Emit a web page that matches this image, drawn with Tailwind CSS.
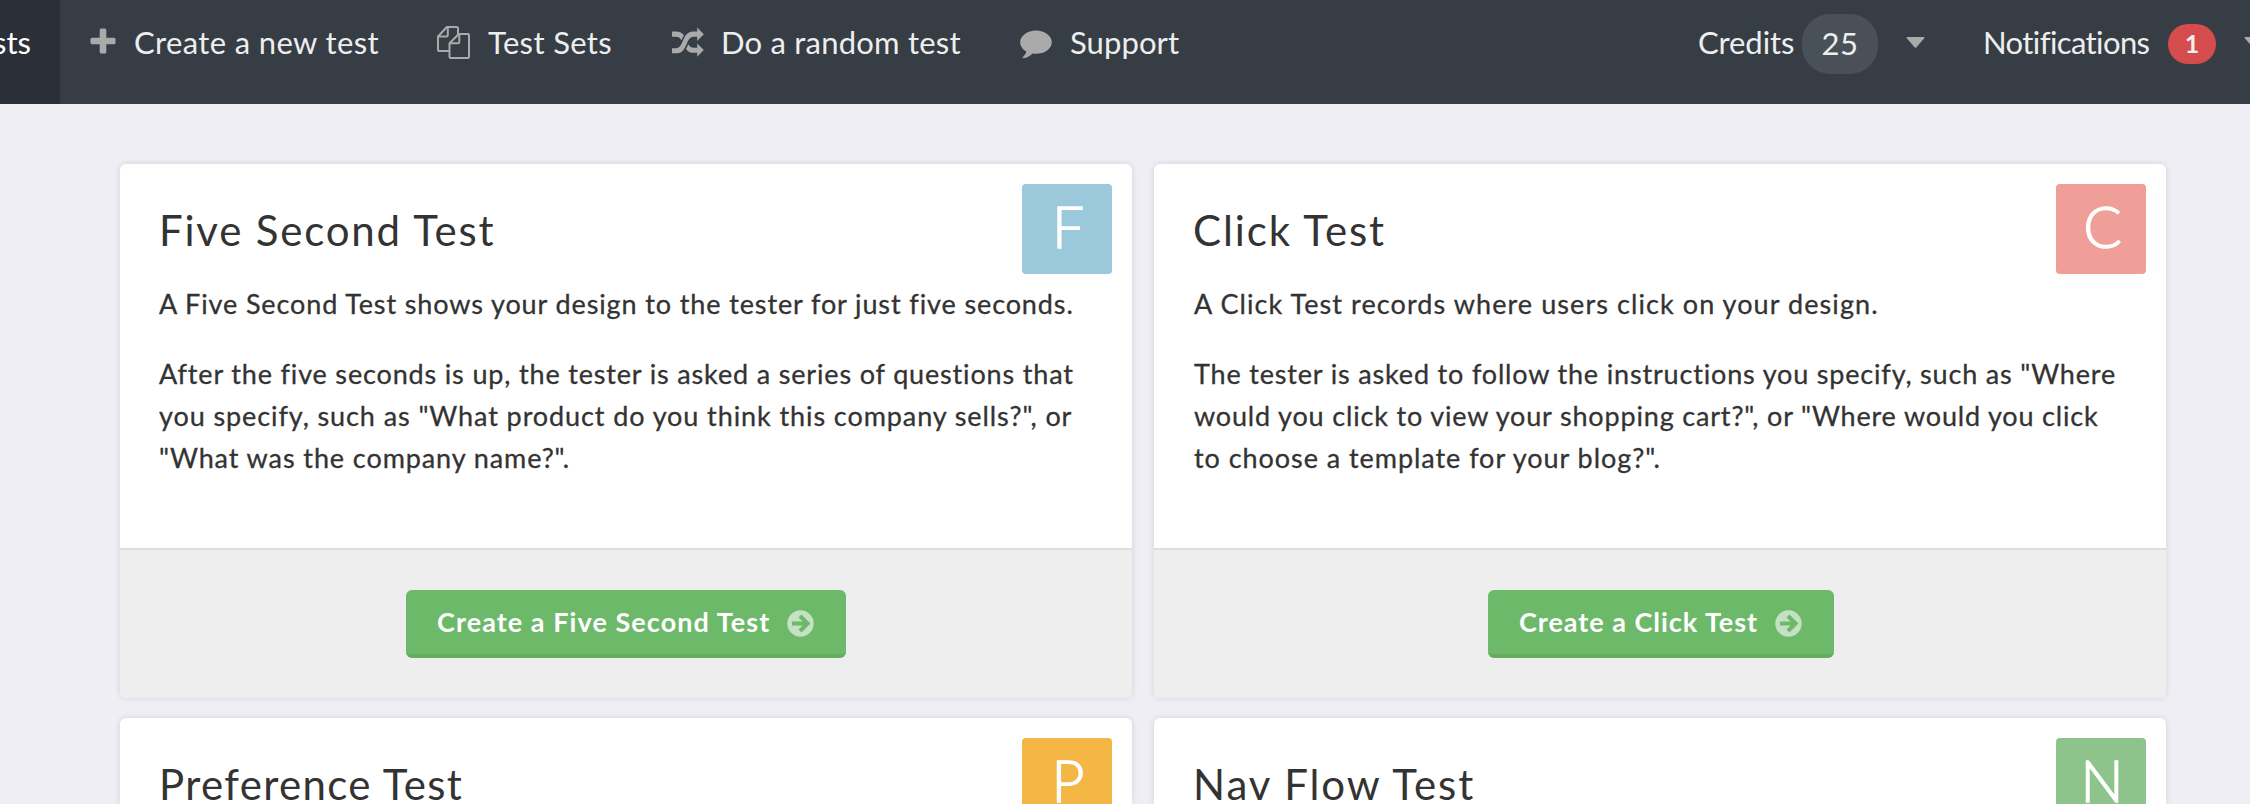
<!DOCTYPE html>
<html lang="en">
<head>
<meta charset="utf-8">
<title>Create a test</title>
<script src="https://cdn.jsdelivr.net/npm/@tailwindcss/browser@4"></script>
</head>
<body class="w-[2250px] h-[804px] overflow-hidden bg-[#efeef4] font-['Lato','Open_Sans',sans-serif] text-[#333333]">

<header class="flex h-[104px] w-[2250px] overflow-hidden bg-[#363d45] text-[31px] leading-[85px] text-[#eeeeee] whitespace-nowrap">
  <a class="flex w-[60px] shrink-0 justify-end bg-[#2b2f37] pr-[29px] text-white"><span>Tests</span></a>

  <nav class="flex h-[85px] items-center">
    <a class="flex w-[377px] items-center pl-[30px]">
      <svg class="mt-[-3px] h-[26px] w-[26px]" viewBox="0 0 26 26" fill="#aaaaaa"><rect x="9.700" y="0.500" width="6.600" height="25" rx="1.600"/><rect x="0.500" y="9.700" width="25" height="6.600" rx="1.600"/></svg>
      <span class="ml-[18px] tracking-[0.37px]">Create a new test</span>
    </a>
    <a class="flex w-[235px] items-center">
      <svg class="h-[33px] w-[33px]" viewBox="0 0 33 33" fill="none" stroke="#aaaaaa" stroke-width="2" stroke-linejoin="round"><path d="M12.500 25H2.200a1.200 1.200 0 0 1-1.200-1.200V10.500L9.800 1H19.800a1.200 1.200 0 0 1 1.200 1.200V8.300"/><path d="M10.800 1V9.300a1.200 1.200 0 0 1-1.200 1.200H1"/><path d="M12.500 17.300L21.800 8H30.800a1.200 1.200 0 0 1 1.200 1.200V30.800a1.200 1.200 0 0 1-1.200 1.200H13.700a1.200 1.200 0 0 1-1.200-1.200z"/><path d="M22.300 8V16.100a1.200 1.200 0 0 1-1.200 1.200H12.500"/></svg>
      <span class="ml-[18px] tracking-[0.36px]">Test Sets</span>
    </a>
    <a class="flex w-[348px] items-center">
      <svg class="mt-[-2px] h-[30px] w-[32px]" viewBox="0 0 32 30" fill="#aaaaaa"><path d="M25.200 0.500L31.800 7.200L25.200 13.900V9.700H22C18.500 9.700 17 11.800 15.400 15.200L13.500 19.400C11.300 24 8.700 26.300 4 26.300H0V21.200H4C7 21.200 8.300 19.300 9.900 16L11.700 12C13.800 7.200 16.600 4.600 22 4.600H25.200z"/><path d="M0 4.600H4C7.800 4.600 10.200 6 12 8.600C11 10 10.200 11.700 9.500 13.200C8 10.700 6.700 9.700 4 9.700H0z"/><path d="M25.200 16.500L31.800 23.100L25.200 29.700V25.800H22C18.300 25.800 15.800 24.400 14 21.900C15 20.400 15.700 18.800 16.400 17.300C17.700 19.700 19.200 20.800 22 20.800H25.200z"/></svg>
      <span class="ml-[17px] tracking-[0.22px]">Do a random test</span>
    </a>
    <a class="flex w-[677px] items-center">
      <svg class="mt-[4px] h-[29px] w-[32px]" viewBox="0 0 32 29" fill="#aaaaaa"><path d="M16 0.500C24.600 0.500 31.800 5.700 31.800 12.200S24.600 23.800 16 23.800C14.800 23.800 13.700 23.700 12.600 23.500C10 26 6.800 27.800 3.300 28.200C2.500 28.300 2.300 27.400 2.900 26.900C4.600 25.500 5.800 24 6.300 21.500C2.600 19.400 0.200 16 0.200 12.200C0.200 5.700 7.400 0.500 16 0.500z"/></svg>
      <span class="ml-[18px] tracking-[0.1px]">Support</span>
    </a>
    <a class="flex w-[286px] items-center pl-[1px]">
      <span class="w-[104px] tracking-[-0.09px]">Credits</span>
      <span class="mt-[3px] flex h-[60px] w-[76px] items-center justify-center rounded-[28px] bg-[#4a5057] pb-[2px] leading-[58px] tracking-[0.5px]">25</span>
      <svg class="ml-[28px] h-[11px] w-[19px]" viewBox="0 0 19 11" fill="#aaaaaa"><path d="M1.300 0H17.700Q19 0 18.200 1.200L10.500 10.200Q9.500 11.300 8.500 10.200L0.800 1.200Q0 0 1.300 0z"/></svg>
    </a>
    <a class="flex items-center">
      <span class="w-[185px] tracking-[-0.6px]">Notifications</span>
      <span class="mt-[3px] flex h-[40px] w-[48px] items-center justify-center rounded-[20px] bg-[#d54c4c] pb-[2px] text-[25px] leading-[38px] font-bold">1</span>
      <svg class="ml-[28px] h-[11px] w-[19px] shrink-0" viewBox="0 0 19 11" fill="#aaaaaa"><path d="M1.300 0H17.700Q19 0 18.200 1.200L10.500 10.200Q9.500 11.300 8.500 10.200L0.800 1.200Q0 0 1.300 0z"/></svg>
    </a>
  </nav>
</header>

<main class="grid h-[700px] grid-cols-[1012px_1012px] grid-rows-[534px_86px] gap-x-[22px] gap-y-[20px] pt-[60px] pl-[120px]">

  <section class="flex h-[534px] flex-col overflow-hidden rounded-[6px] bg-white shadow-[0_0_6px_rgba(0,0,0,0.12)]">
    <div class="flex h-[384px] flex-col pl-[40px]">
      <div class="flex justify-between pr-[20px]">
        <h2 class="ml-[-1px] pt-[40px] text-[42px] leading-[52px] tracking-[1.8px]">Five Second Test</h2>
        <div class="mt-[20px] h-[90px] w-[90px] rounded-[4px] bg-[#9bc8db] pl-[2px] text-center text-[57px] leading-[85px] font-light text-white [-webkit-text-stroke:1.3px_white]">F</div>
      </div>
      <div class="mt-[9px] ml-[-1px] text-[27px] leading-[42px] whitespace-nowrap [-webkit-text-stroke:0.3px_#333333]">
        <p class="tracking-[0.886px]">A Five Second Test shows your design to the tester for just five seconds.</p>
        <p class="mt-[28px]"><span class="tracking-[0.84px]">After the five seconds is up, the tester is asked a series of questions that</span><br><span class="tracking-[0.91px]">you specify, such as "What product do you think this company sells?", or</span><br><span class="tracking-[0.907px]">"What was the company name?".</span></p>
      </div>
    </div>
    <div class="flex h-[150px] justify-center border-t-2 border-[#dfdfdf] bg-[#eeeeee] pt-[40px]">
      <a class="flex h-[68px] w-[440px] items-center rounded-[6px] border-b-4 border-[#66ac61] bg-[#6db96a] pl-[31px] text-[27px] font-bold text-white">
        <span class="w-[350px] leading-[64px] tracking-[1.07px] whitespace-nowrap">Create a Five Second Test</span>
        <svg class="mt-[2px] h-[27px] w-[27px]" viewBox="0 0 27 27"><circle cx="13.500" cy="13.500" r="13.200" fill="#c4e2c3"/><path d="M5 13.500H19.500M13 6L20.500 13.500L13 21" fill="none" stroke="#6db96a" stroke-width="4.200"/></svg>
      </a>
    </div>
  </section>

  <section class="flex h-[534px] flex-col overflow-hidden rounded-[6px] bg-white shadow-[0_0_6px_rgba(0,0,0,0.12)]">
    <div class="flex h-[384px] flex-col pl-[40px]">
      <div class="flex justify-between pr-[20px]">
        <h2 class="ml-[-1px] pt-[40px] text-[42px] leading-[52px] tracking-[1.9px]">Click Test</h2>
        <div class="mt-[20px] h-[90px] w-[90px] rounded-[4px] bg-[#ef9f98] pl-[3px] text-center text-[57px] leading-[85px] font-light text-white [-webkit-text-stroke:1.3px_white]">C</div>
      </div>
      <div class="mt-[9px] text-[27px] leading-[42px] whitespace-nowrap [-webkit-text-stroke:0.3px_#333333]">
        <p class="tracking-[1.08px]">A Click Test records where users click on your design.</p>
        <p class="mt-[28px]"><span class="tracking-[0.83px]">The tester is asked to follow the instructions you specify, such as "Where</span><br><span class="tracking-[0.83px]">would you click to view your shopping cart?", or "Where would you click</span><br><span class="tracking-[0.95px]">to choose a template for your blog?".</span></p>
      </div>
    </div>
    <div class="flex h-[150px] justify-center border-t-2 border-[#dfdfdf] bg-[#eeeeee] pt-[40px] pl-[2px]">
      <a class="flex h-[68px] w-[346px] items-center rounded-[6px] border-b-4 border-[#66ac61] bg-[#6db96a] pl-[31px] text-[27px] font-bold text-white">
        <span class="w-[256px] leading-[64px] tracking-[0.98px] whitespace-nowrap">Create a Click Test</span>
        <svg class="mt-[2px] h-[27px] w-[27px]" viewBox="0 0 27 27"><circle cx="13.500" cy="13.500" r="13.200" fill="#c4e2c3"/><path d="M5 13.500H19.500M13 6L20.500 13.500L13 21" fill="none" stroke="#6db96a" stroke-width="4.200"/></svg>
      </a>
    </div>
  </section>

  <section class="overflow-hidden rounded-t-[6px] bg-white shadow-[0_0_6px_rgba(0,0,0,0.12)]">
    <div class="flex h-[110px] justify-between pr-[20px] pl-[40px]">
      <h2 class="ml-[-1px] pt-[40px] text-[42px] leading-[52px] tracking-[1.35px]">Preference Test</h2>
      <div class="mt-[20px] h-[90px] w-[90px] rounded-[4px] bg-[#f4b644] pl-[2px] text-center text-[57px] leading-[85px] font-light text-white [-webkit-text-stroke:1.3px_white]">P</div>
    </div>
  </section>

  <section class="overflow-hidden rounded-t-[6px] bg-white shadow-[0_0_6px_rgba(0,0,0,0.12)]">
    <div class="flex h-[110px] justify-between pr-[20px] pl-[40px]">
      <h2 class="ml-[-1px] pt-[40px] text-[42px] leading-[52px] tracking-[1.96px]">Nav Flow Test</h2>
      <div class="mt-[20px] h-[90px] w-[90px] rounded-[4px] bg-[#8ec48c] pl-[2px] text-center text-[57px] leading-[85px] font-light text-white [-webkit-text-stroke:1.3px_white]">N</div>
    </div>
  </section>

</main>
</body>
</html>
